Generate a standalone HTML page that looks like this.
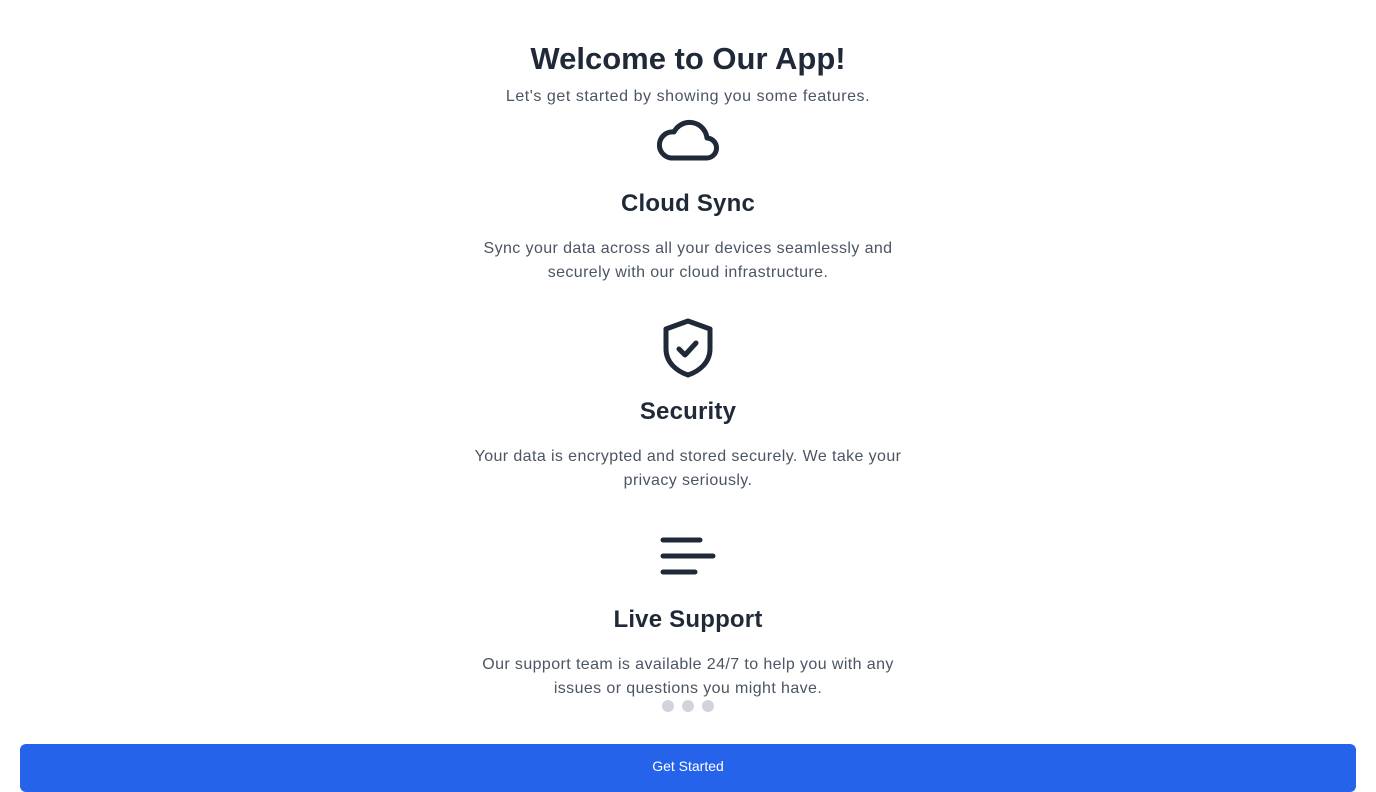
<!DOCTYPE html>
<html><head><style>
body{margin:0;width:1376px;height:768px;overflow:hidden;background:#fff;font-family:"Liberation Sans",sans-serif;position:relative}
.c{position:absolute;left:0;width:1376px;text-align:center;white-space:nowrap}
h1{margin:0;font-size:31px;font-weight:700;color:#1f2937}
.sub{font-size:16px;color:#4b5563;letter-spacing:0.55px}
.h{font-size:24px;font-weight:700;color:#1f2937;letter-spacing:0.2px}
.d{font-size:16px;color:#4b5563;line-height:24px;letter-spacing:0.4px}
svg{position:absolute}
.dot{position:absolute;top:700px;width:12px;height:12px;border-radius:50%;background:#d1d5db}
.btn{position:absolute;left:20px;top:744px;width:1336px;height:48px;background:#2563eb;border-radius:6px;color:#fff;text-align:center;font-size:14px;line-height:44px}
</style></head><body>
<div class="c" style="top:41px"><h1>Welcome to Our App!</h1></div>
<div class="c sub" style="top:88px">Let's get started by showing you some features.</div>
<svg style="left:657px;top:115px" width="64" height="50" viewBox="0 0 64 50"><path d="M14 43 H49 A10 10 0 0 0 50 23 A17.5 17.5 0 0 0 17 17 A13 13 0 0 0 14 43 Z" fill="none" stroke="#1f2937" stroke-width="5" stroke-linejoin="round"/></svg>
<div class="c h" style="top:190px">Cloud Sync</div>
<div class="c d" style="top:237px">Sync your data across all your devices seamlessly and<br>securely with our cloud infrastructure.</div>
<svg style="left:660px;top:317px" width="56" height="64" viewBox="0 0 56 64"><path d="M28 4 L50 12 V32 C50 45 40 54 28 58 C16 54 6 45 6 32 V12 Z" fill="none" stroke="#1f2937" stroke-width="5" stroke-linejoin="round"/><path d="M19 32 L25 38 L36 26" fill="none" stroke="#1f2937" stroke-width="5" stroke-linecap="round" stroke-linejoin="round"/></svg>
<div class="c h" style="top:398px">Security</div>
<div class="c d" style="top:445px">Your data is encrypted and stored securely. We take your<br>privacy seriously.</div>
<svg style="left:658px;top:535px" width="60" height="44" viewBox="0 0 60 44"><path d="M5 5 H42 M5 21 H55 M5 37 H37" stroke="#1f2937" stroke-width="5" stroke-linecap="round"/></svg>
<div class="c h" style="top:606px">Live Support</div>
<div class="c d" style="top:653px">Our support team is available 24/7 to help you with any<br>issues or questions you might have.</div>
<div class="dot" style="left:662px"></div><div class="dot" style="left:682px"></div><div class="dot" style="left:702px"></div>
<div class="btn">Get Started</div>
</body></html>
